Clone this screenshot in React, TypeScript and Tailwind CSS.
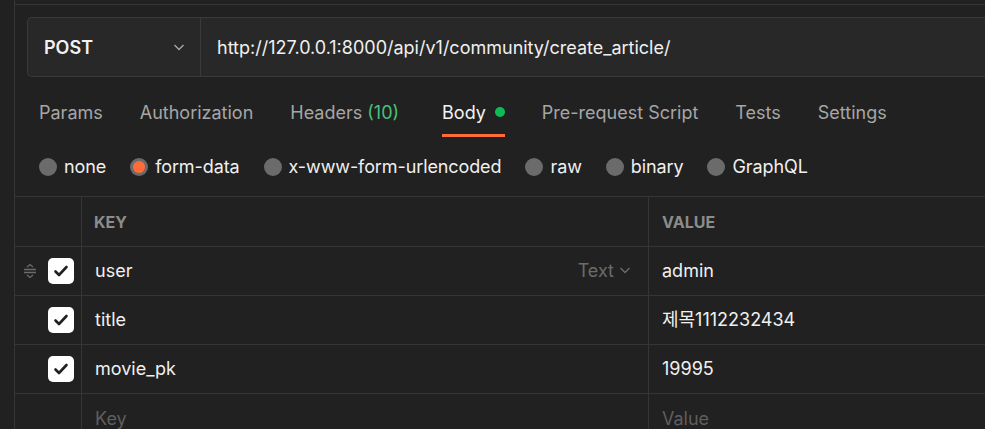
import React from "react";

const tabs = [
  { label: "Params" },
  { label: "Authorization" },
  { label: "Headers", count: "(10)" },
  { label: "Body", active: true },
  { label: "Pre-request Script" },
  { label: "Tests" },
  { label: "Settings" },
];

const bodyTypes = [
  { label: "none" },
  { label: "form-data", checked: true },
  { label: "x-www-form-urlencoded" },
  { label: "raw" },
  { label: "binary" },
  { label: "GraphQL" },
];

const rows = [
  { key: "user", value: "admin", hover: true },
  { key: "title", value: "제목1112232434" },
  { key: "movie_pk", value: "19995" },
];

const Check = () => (
  <div className="w-[26px] h-[26px] rounded-[5px] bg-white flex items-center justify-center">
    <svg width="16" height="16" viewBox="0 0 16 16" fill="none">
      <path d="M2.5 8.5l3.5 3.5 7.5-8" stroke="#212121" strokeWidth="2.6" strokeLinecap="round" strokeLinejoin="round" />
    </svg>
  </div>
);

const DragHandle = () => (
  <svg width="16" height="16" viewBox="0 0 16 16" fill="none" stroke="#6b6b6b" strokeWidth="1.3">
    <path d="M5 4l3-2.5 3 2.5" />
    <path d="M2 6.5h12M2 9.5h12" />
    <path d="M5 12l3 2.5 3-2.5" />
  </svg>
);

const Chevron = ({ size = 14, color = "#a6a6a6" }: { size?: number; color?: string }) => (
  <svg width={size} height={size} viewBox="0 0 14 14" fill="none" stroke={color} strokeWidth="1.4">
    <path d="M2.5 5l4.5 4.5 4.5-4.5" />
  </svg>
);

const App = () => {
  return (
    <div
      className="w-[985px] h-[429px] overflow-hidden bg-[#212121] flex text-[18px]"
      style={{ fontFamily: "Inter, 'Noto Sans CJK KR', sans-serif" }}
    >
      <div className="w-[14px] shrink-0" />
      <div className="flex-1 flex flex-col border-l border-[#353535]">
        <div className="h-[5px] border-b border-[#353535] shrink-0" />

        {/* url bar */}
        <div className="ml-[12px] mt-[12px] h-[60px] flex border border-r-0 border-[#3a3a3a] rounded-l-[5px] bg-[#282828] shrink-0">
          <div className="w-[173px] flex items-center justify-between pl-[16px] pr-[14px] border-r border-[#3a3a3a]">
            <span className="font-semibold text-[#f2f2f2]">POST</span>
            <Chevron />
          </div>
          <div className="flex items-center pl-[16px] text-[#f0f0f0]">
            http://127.0.0.1:8000/api/v1/community/create_article/
          </div>
        </div>

        {/* tabs */}
        <div className="flex gap-[37px] pl-[24px] h-[60px] items-stretch shrink-0">
          {tabs.map((t) => (
            <div
              key={t.label}
              className={`flex items-center gap-[5px] border-b-[3px] pt-[13px] ${t.active ? "ml-[6px] border-[#ff6c37] text-[#f2f2f2]" : "border-transparent text-[#a6a6a6]"}`}
            >
              <span>{t.label}</span>
              {t.count && <span className="text-[#49c17a]">{t.count}</span>}
              {t.active && <span className="w-[10px] h-[10px] rounded-full bg-[#0cbb52] ml-[4px]" />}
            </div>
          ))}
        </div>

        {/* body type */}
        <div className="flex items-center h-[59px] pl-[24px] gap-[24px] shrink-0">
          {bodyTypes.map((b) => (
            <div key={b.label} className="flex items-center gap-[7px] text-[#f0f0f0]">
              {b.checked ? (
                <span className="w-[18px] h-[18px] rounded-full bg-[#6b6b6b] flex items-center justify-center">
                  <span className="w-[12px] h-[12px] rounded-full bg-[#ff6c37]" />
                </span>
              ) : (
                <span className="w-[18px] h-[18px] rounded-full bg-[#6b6b6b]" />
              )}
              <span className="tracking-[-0.1px]">{b.label}</span>
            </div>
          ))}
        </div>

        {/* table */}
        <div className="border-t border-[#353535]">
          <div className="flex h-[50px] border-b border-[#353535]">
            <div className="w-[67px] border-r border-[#353535]" />
            <div className="w-[567px] border-r border-[#353535] flex items-center pl-[12px] text-[16px] font-bold text-[#8c8c8c]">KEY</div>
            <div className="flex-1 flex items-center pl-[13px] text-[16px] font-bold text-[#8c8c8c]">VALUE</div>
          </div>
          {rows.map((r) => (
            <div key={r.key} className="flex h-[49px] border-b border-[#353535] text-[#f0f0f0]">
              <div className="w-[67px] border-r border-[#353535] flex items-center">
                <div className="w-[23px] flex justify-end">{r.hover && <DragHandle />}</div>
                <div className="ml-[10px]">
                  <Check />
                </div>
              </div>
              <div className="w-[567px] border-r border-[#353535] flex items-center justify-between pl-[13px] pr-[16px] pb-[2px]">
                <span>{r.key}</span>
                {r.hover && (
                  <span className="flex items-center gap-[4px] text-[#6b6b6b]">
                    Text <Chevron size={14} color="#6b6b6b" />
                  </span>
                )}
              </div>
              <div className="flex-1 flex items-center pl-[13px] pb-[2px]">{r.value}</div>
            </div>
          ))}
          <div className="flex h-[49px] text-[#5e5e5e]">
            <div className="w-[67px] border-r border-[#353535]" />
            <div className="w-[567px] border-r border-[#353535] flex items-center pl-[13px]">Key</div>
            <div className="flex-1 flex items-center pl-[13px]">Value</div>
          </div>
        </div>
      </div>
    </div>
  );
};

export default App;
